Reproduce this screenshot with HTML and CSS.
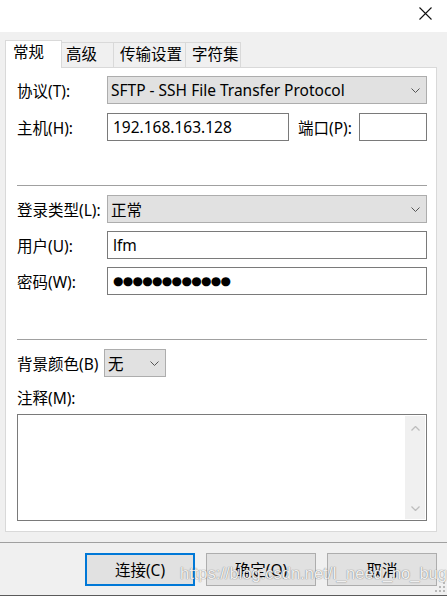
FILE: index.html
```html
<!DOCTYPE html>
<html lang="zh-CN">
<head>
<meta charset="utf-8">
<title>会话属性</title>
<link rel="stylesheet" href="styles.css">
</head>
<body>
<div class="window">
  <div class="titlebar">
    <svg class="close" width="13" height="13" viewBox="0 0 13 13"><path d="M0.5 0.5L12.5 12.5M12.5 0.5L0.5 12.5" stroke="#111" stroke-width="1.1" fill="none"/></svg>
  </div>
  <div class="tabs">
    <div class="tab active">常规</div>
    <div class="tab t2">高级</div>
    <div class="tab t3">传输设置</div>
    <div class="tab t4">字符集</div>
  </div>
  <div class="panel">
    <div class="row">
      <label class="lbl">协议(T):</label>
      <div class="combo wide">
        <span>SFTP - SSH File Transfer Protocol</span>
        <svg class="chev" width="9" height="5" viewBox="0 0 9 5"><path d="M0.5 0.5L4.5 4.5L8.5 0.5" stroke="#555" fill="none"/></svg>
      </div>
    </div>
    <div class="row gap9">
      <label class="lbl">主机(H):</label>
      <div class="input host">192.168.163.128</div>
      <label class="lbl port-lbl">端口(P):</label>
      <div class="input port"></div>
    </div>
    <div class="sep first"></div>
    <div class="row">
      <label class="lbl">登录类型(L):</label>
      <div class="combo wide">
        <span>正常</span>
        <svg class="chev" width="9" height="5" viewBox="0 0 9 5"><path d="M0.5 0.5L4.5 4.5L8.5 0.5" stroke="#555" fill="none"/></svg>
      </div>
    </div>
    <div class="row gap8">
      <label class="lbl">用户(U):</label>
      <div class="input grow">lfm</div>
    </div>
    <div class="row gap8">
      <label class="lbl">密码(W):</label>
      <div class="input grow pwd">●●●●●●●●●●●●</div>
    </div>
    <div class="sep"></div>
    <div class="row">
      <label class="lbl bg-lbl">背景颜色(B)</label>
      <div class="combo small">
        <span>无</span>
        <svg class="chev" width="9" height="5" viewBox="0 0 9 5"><path d="M0.5 0.5L4.5 4.5L8.5 0.5" stroke="#555" fill="none"/></svg>
      </div>
    </div>
    <div class="note-lbl">注释(M):</div>
    <div class="textarea">
      <div class="scroll">
        <svg width="9" height="5" viewBox="0 0 9 5"><path d="M0.5 4.5L4.5 0.5L8.5 4.5" stroke="#bdbdbd" stroke-width="1.3" fill="none"/></svg>
        <svg width="9" height="5" viewBox="0 0 9 5"><path d="M0.5 0.5L4.5 4.5L8.5 0.5" stroke="#bdbdbd" stroke-width="1.3" fill="none"/></svg>
      </div>
    </div>
  </div>
  <div class="footer">
    <button class="btn default">连接(C)</button>
    <button class="btn">确定(O)</button>
    <button class="btn">取消</button>
  </div>
  <div class="watermark">https://blog.csdn.net/I_need_no_bug</div>
  <svg class="grip" width="11" height="11" viewBox="0 0 11 11">
    <rect x="8" y="0" width="2" height="2" fill="#b8b8b8"/>
    <rect x="4" y="4" width="2" height="2" fill="#b8b8b8"/>
    <rect x="8" y="4" width="2" height="2" fill="#b8b8b8"/>
    <rect x="0" y="8" width="2" height="2" fill="#b8b8b8"/>
    <rect x="4" y="8" width="2" height="2" fill="#b8b8b8"/>
    <rect x="8" y="8" width="2" height="2" fill="#b8b8b8"/>
  </svg>
</div>
</body>
</html>
```

FILE: styles.css
```css
* { box-sizing: border-box; }
html, body { margin: 0; padding: 0; }
body {
  width: 447px;
  height: 596px;
  overflow: hidden;
  background: #f0f0f0;
  font-family: "Noto Sans", "Noto Sans CJK SC", sans-serif;
  font-size: 15.5px;
  color: #000;
}
.window {
  position: relative;
  width: 447px;
  height: 596px;
  border-bottom: 1px solid #5a5a5a;
  display: flex;
  flex-direction: column;
}
.titlebar {
  height: 32px;
  background: #fff;
  display: flex;
  justify-content: flex-end;
  align-items: flex-start;
  padding: 7px 15px 0 0;
}
.close { display: block; }

.tabs {
  display: flex;
  align-items: flex-end;
  margin: 8px 0 0 5px;
  height: 27px;
  position: relative;
  z-index: 2;
}
.tab {
  height: 25px;
  border: 1px solid #d9d9d9;
  border-left: none;
  border-bottom: none;
  background: #f0f0f0;
  line-height: 23px;
  white-space: nowrap;
}
.tab.active {
  height: 28px;
  margin-bottom: -1px;
  width: 57px;
  border-left: 1px solid #d9d9d9;
  background: #fff;
  padding-left: 7px;
  line-height: 22px;
}
.t2 { width: 52px; padding-left: 4px; }
.t3 { width: 72px; padding-left: 6px; }
.t4 { width: 55px; padding-left: 6px; }

.panel {
  margin-left: 5px;
  width: 432px;
  height: 465px;
  background: #fff;
  border: 1px solid #d9d9d9;
  padding: 8px 9px 0 11px;
  display: flex;
  flex-direction: column;
}
.row {
  display: flex;
  align-items: center;
  height: 28px;
}
.gap9 { margin-top: 9px; }
.gap8 { margin-top: 8px; }
.lbl {
  width: 90px;
  flex: none;
  white-space: nowrap;
}
.combo {
  height: 28px;
  background: #e1e1e1;
  border: 1px solid #adadad;
  display: flex;
  align-items: center;
  justify-content: space-between;
  padding: 0 6px 0 3px;
}
.combo.wide { flex: 1; }
.combo.small { width: 62px; padding-left: 3px; }
.chev { display: block; }
.input {
  height: 28px;
  background: #fff;
  border: 1px solid #7a7a7a;
  display: flex;
  align-items: center;
  padding-left: 5px;
  white-space: nowrap;
}
.host { width: 182px; }
.port-lbl { width: auto; margin-left: 9px; margin-right: auto; }
.port { width: 68px; }
.grow { flex: 1; }
.pwd {
  font-family: "DejaVu Sans", sans-serif;
  font-size: 12px;
  letter-spacing: -0.7px;
}
.sep {
  height: 1px;
  background: #a0a0a0;
  margin: 44px 0 9px;
  flex: none;
}
.sep.first { margin-top: 44px; }
.bg-lbl { width: 87px; }
.note-lbl {
  height: 37px;
  padding-top: 11px;
  line-height: 20px;
}
.textarea {
  height: 107px;
  border: 1px solid #7a7a7a;
  display: flex;
  justify-content: flex-end;
  padding: 1px 1px 1px 0;
}
.scroll {
  width: 20px;
  background: #f0f0f0;
  display: flex;
  flex-direction: column;
  justify-content: space-between;
  align-items: center;
  padding: 10px 0 8px;
}
.footer {
  margin-top: 10px;
  border-top: 1px solid #a0a0a0;
  display: flex;
  justify-content: flex-end;
  gap: 11px;
  padding: 10px 10px 0 0;
}
.btn {
  width: 110px;
  height: 33px;
  background: #e1e1e1;
  border: 1px solid #adadad;
  font: inherit;
  color: #000;
  padding: 0;
}
.btn.default { border: 2px solid #0078d7; }
.watermark {
  position: absolute;
  left: 180px;
  top: 564px;
  font-family: "Liberation Sans", sans-serif;
  font-size: 16.5px;
  color: rgba(255, 255, 255, 0.9);
  text-shadow: 0 0 1px rgba(110, 110, 110, 0.8), 0 0 1px rgba(110, 110, 110, 0.6);
  white-space: nowrap;
  pointer-events: none;
}
.grip {
  position: absolute;
  right: 1px;
  bottom: 2px;
}
```
